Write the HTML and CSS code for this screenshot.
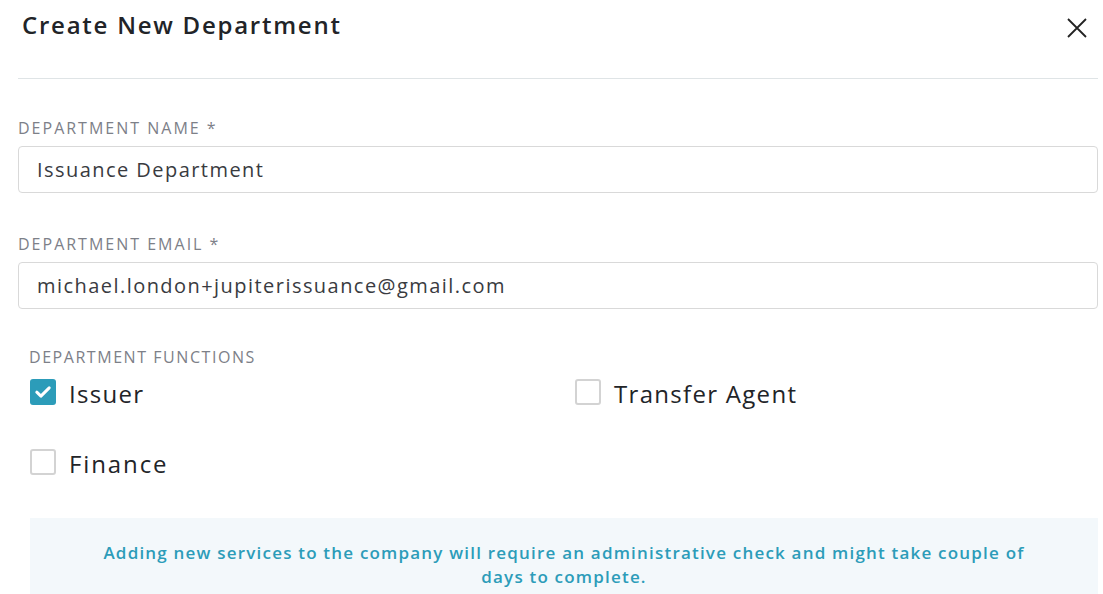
FILE: index.html
```html
<!DOCTYPE html>
<html lang="en">
<head>
<meta charset="utf-8">
<title>Create New Department</title>
<link rel="stylesheet" href="styles.css">
</head>
<body>
<div class="modal">
  <header class="modal-header">
    <h2 class="modal-title">Create New Department</h2>
    <button class="close-btn" type="button" aria-label="Close">
      <svg width="20" height="20" viewBox="0 0 20 20"><path d="M1 1L19 19M19 1L1 19" stroke="#222" stroke-width="1.8" fill="none"/></svg>
    </button>
  </header>

  <div class="field first">
    <label class="field-label">DEPARTMENT NAME *</label>
    <div class="input">Issuance Department</div>
  </div>

  <div class="field">
    <label class="field-label">DEPARTMENT EMAIL *</label>
    <div class="input">michael.london+jupiterissuance@gmail.com</div>
  </div>

  <div class="functions">
    <div class="field-label narrow">DEPARTMENT FUNCTIONS</div>
    <div class="check-grid">
      <div class="check-item">
        <span class="box checked">
          <svg width="26" height="26" viewBox="0 0 26 26"><path d="M6.8 13.2L10.9 17.1L19.2 8.9" stroke="#fff" stroke-width="3" fill="none" stroke-linecap="round" stroke-linejoin="round"/></svg>
        </span>
        <span class="check-text">Issuer</span>
      </div>
      <div class="check-item">
        <span class="box"></span>
        <span class="check-text">Transfer Agent</span>
      </div>
      <div class="check-item">
        <span class="box"></span>
        <span class="check-text wide">Finance</span>
      </div>
    </div>
  </div>

  <div class="notice">
    Adding new services to the company will require an administrative check and might take couple of days to complete.
  </div>
</div>
</body>
</html>
```

FILE: styles.css
```css
* { box-sizing: border-box; }

html, body {
  margin: 0;
  padding: 0;
  background: #ffffff;
}

body {
  font-family: "Open Sans", "Liberation Sans", sans-serif;
  color: #222428;
  overflow: hidden;
}

.modal {
  padding: 0 5px 0 18px;
}

.modal-header {
  display: flex;
  justify-content: space-between;
  align-items: flex-start;
  height: 79px;
  padding: 10px 0 0 4px;
  border-bottom: 1px solid #dfe4e6;
}

.modal-title {
  margin: 0;
  font-size: 24px;
  line-height: 30px;
  font-weight: 600;
  letter-spacing: 1.75px;
  color: #222428;
}

.close-btn {
  margin: 8px 11px 0 0;
  padding: 0;
  border: 0;
  background: none;
  width: 20px;
  height: 20px;
  display: block;
}
.close-btn svg { display: block; }

.field { margin-top: 41px; }
.field.first { margin-top: 39px; }

.field-label {
  display: block;
  font-size: 16px;
  line-height: 20px;
  font-weight: 500;
  letter-spacing: 2px;
  color: #7d8088;
}
.field-label.narrow { letter-spacing: 1.55px; }

.input {
  margin-top: 8px;
  height: 47px;
  border: 1px solid #d9d9d9;
  border-radius: 4px;
  display: flex;
  align-items: center;
  padding: 0 18px;
  font-size: 20px;
  line-height: 24px;
  letter-spacing: 1.45px;
  color: #393b3f;
}

.functions {
  margin-top: 38px;
  padding-left: 11px;
}

.check-grid {
  margin-top: 12px;
  display: grid;
  grid-template-columns: 1fr 1fr;
  grid-auto-rows: 26px;
  column-gap: 22px;
  row-gap: 44px;
  padding-left: 1px;
}

.check-item {
  display: flex;
  align-items: center;
  gap: 12px;
  height: 26px;
}

.box {
  width: 26px;
  height: 26px;
  flex: none;
  border: 2px solid #d3d3d3;
  border-radius: 3px;
  background: #fff;
}

.box.checked {
  border: 0;
  background: #2c9cb9;
}
.box svg { display: block; }

.check-text {
  font-size: 24px;
  line-height: 26px;
  font-weight: 500;
  letter-spacing: 1.3px;
  color: #222428;
  padding-top: 3px;
  margin-left: 1px;
}
.check-text.wide { letter-spacing: 1.9px; }

.notice {
  margin: 43px 0 0 12px;
  background: #f3f8fb;
  padding: 23px 60px 12px;
  text-align: center;
  font-size: 17px;
  line-height: 24px;
  font-weight: 600;
  letter-spacing: 1.2px;
  color: #2c9cb9;
}
```
